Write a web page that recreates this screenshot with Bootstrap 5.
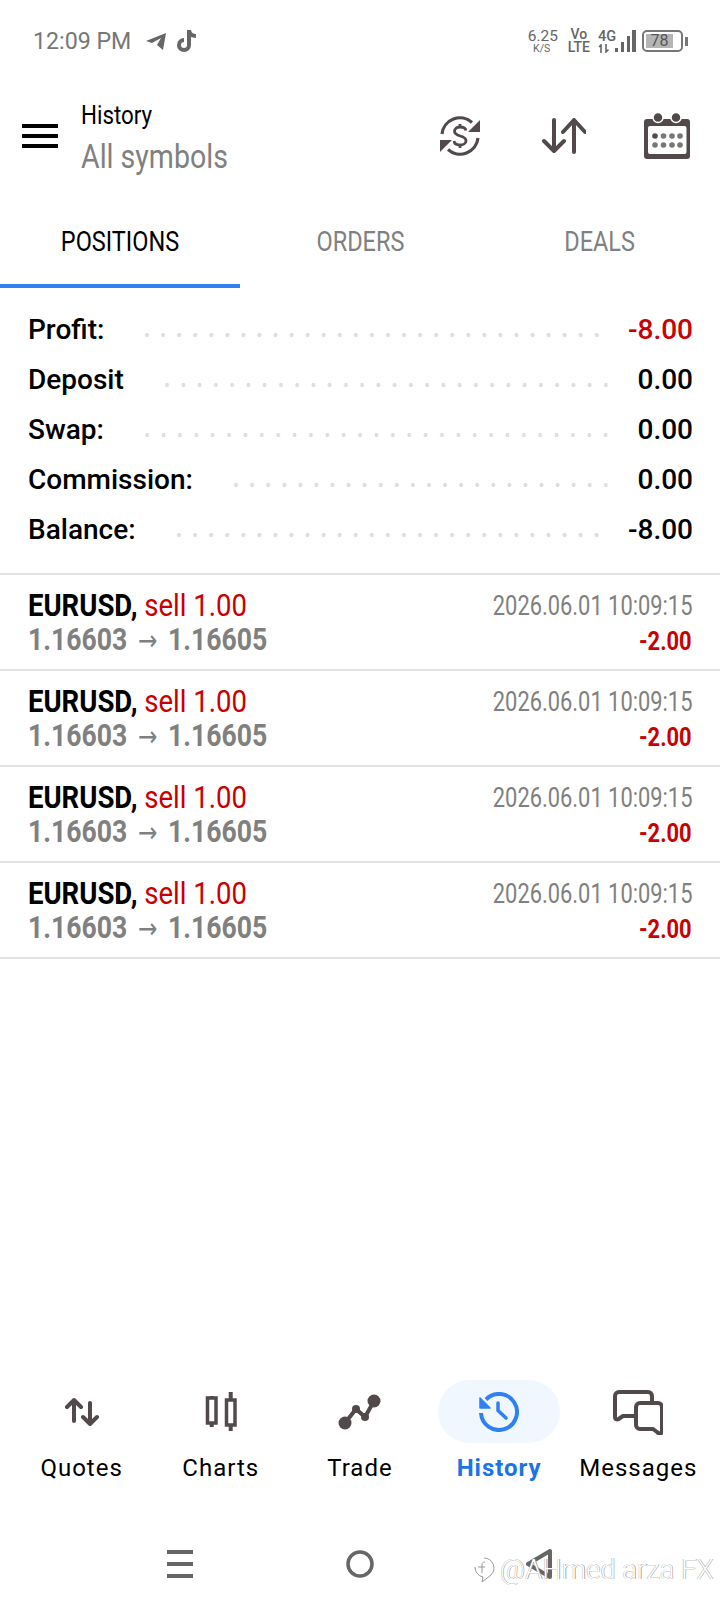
<!DOCTYPE html>
<html>
<head>
  <meta charset="utf-8">
  <title>History</title>
  <link rel="stylesheet" href="https://cdn.jsdelivr.net/npm/bootstrap@5.3.0/dist/css/bootstrap.min.css">
  <style>
    body {
      background: #fff;
      font-family: Roboto, "Liberation Sans", sans-serif;
      color: #000;
    }
    .phone {
      width: 720px;
      height: 1612px;
      position: relative;
      overflow: hidden;
      display: flex;
      flex-direction: column;
    }
    /* Roboto Condensed is not installed, so narrow text gets squeezed */
    .narrow { display: inline-block; transform: scaleX(.86); transform-origin: left center; white-space: nowrap; }
    .narrow-r { display: inline-block; transform: scaleX(.81); transform-origin: right center; white-space: nowrap; }
    .narrow-c { display: inline-block; transform: scaleX(.87); transform-origin: center; white-space: nowrap; }

    .status-bar { height: 80px; flex: none; padding: 2px 32px 0 33px; color: #777; }
    .status-time { font-size: 23.2px; line-height: 1; margin-right: 15px; padding-top: 1px; }
    .ico-tiktok { margin-left: 11px; }
    .net-speed { font-size: 15.5px; line-height: 14px; text-align: center; color: #666; width: 28px; margin-right: 12px; }
    .net-speed b { font-weight: 400; font-size: 10.5px; line-height: 11px; display: block; }
    .net-lte { font-size: 14px; line-height: 13px; color: #666; text-align: center; font-weight: 500; margin-right: 8px; }
    .net-4g { font-size: 14.5px; line-height: 14px; color: #666; font-weight: 500; width: 17px; }
    .net-4g svg { display: block; }
    .ico-signal { margin-right: 6px; }
    .batt { width: 41px; height: 22px; border: 2px solid #777; border-radius: 5px; padding: 2px; }
    .batt-fill { width: 27px; height: 100%; background: #b5b5b5; font-size: 16px; line-height: 14px; text-align: center; color: #555; }
    .batt-tip { width: 3px; height: 9px; background: #777; margin-left: 2px; }

    .top-bar { height: 112px; flex: none; padding: 0 30px 0 22px; }
    .burger { width: 36px; margin-right: 23px; }
    .burger i { display: block; height: 4px; background: #000; margin: 6px 0; }
    .top-text { margin-top: 4px; }
    .top-title { font-size: 26px; line-height: 30px; }
    .top-sub { font-size: 34px; line-height: 40px; margin-top: 6px; color: #808080; }
    .top-sub .narrow { transform: scaleX(.84); }
    .ico-arrows { margin: 0 58px 0 62px; }

    .tabs-row { height: 96px; flex: none; }
    .tab-item { width: 240px; font-size: 27px; line-height: 50px; padding-top: 25px; height: 96px; text-align: center; color: #808080; }
    .tab-item.on { color: #000; border-bottom: 4px solid #2f80f0; }

    .summary { padding: 17px 27px 0 28px; height: 285px; flex: none; }
    .sum-row { height: 50px; display: flex; align-items: center; font-size: 28px; font-weight: 500; }
    .sum-dots {
      height: 4px; margin: 10px 23px 0 35px; flex-grow: 1;
      background-image: radial-gradient(circle, #dedede 1.8px, transparent 2.1px);
      background-size: 16.15px 4px;
      background-repeat: round no-repeat;
    }
    .txt-red { color: #c80000; }

    .deal-list { border-top: 2px solid #e2e2e2; flex: none; }
    .deal-row { height: 96px; padding: 13px 28px 0 28px; border-bottom: 2px solid #e2e2e2; display: flex; justify-content: space-between; }
    .deal-main { font-size: 32px; line-height: 34px; }
    .deal-main b { font-weight: 700; }
    .deal-price { font-size: 32px; line-height: 34px; font-weight: 700; color: #808080; }
    .deal-price .narrow { transform: scaleX(.83); }
    .deal-price i { font-style: normal; font-family: "DejaVu Sans", sans-serif; font-size: 28px; font-weight: 400; margin: 0 5px; }
    .deal-date { font-size: 27px; line-height: 36px; color: #808080; }
    .deal-pl { font-size: 26px; line-height: 34px; font-weight: 700; color: #c80000; }
    .deal-pl .narrow-r { transform: scaleX(.84); }

    .bottom-nav { margin-top: auto; height: 168px; flex: none; padding: 0 12px; display: flex; }
    .nav-cell { width: 139.2px; display: flex; flex-direction: column; align-items: center; }
    .nav-ico { height: 63px; width: 122px; display: flex; align-items: center; justify-content: center; border-radius: 32px; }
    .nav-cell.on .nav-ico { background: #f0f7fe; }
    .nav-lbl { font-size: 24px; line-height: 28px; margin-top: 11px; letter-spacing: 1px; white-space: nowrap; }
    .nav-cell.on .nav-lbl { color: #1a73e8; font-weight: 700; }

    .sys-nav { height: 64px; flex: none; padding-left: 167px; display: flex; align-items: flex-start; }
    .sys-home { margin: 0 152px 0 153px; }
    .watermark {
      position: absolute; left: 473px; top: 1552px; font-size: 27.5px; line-height: 36px;
      color: #fff; white-space: nowrap; font-weight: 300; display: flex; align-items: center; gap: 5px;
      text-shadow: .6px 0 .4px #888, -.6px 0 .4px rgba(120,120,120,.5);
    }
  </style>
</head>
<body>
<div class="phone">

  <div class="status-bar d-flex align-items-center">
    <span class="status-time">12:09 PM</span>
    <svg width="20" height="18" viewBox="0 0 20 18"><path d="M0 9 20 1 17 18 11 13 15 6 6 11Z" fill="#666"/></svg>
    <svg class="ico-tiktok" width="20" height="22" viewBox="0 0 20 22"><path d="M10 0h4c.3 2.500 2 4 5 4v4c-2 0-4-.5-5-1.200V15a7 7 0 1 1-7-7v4a3 3 0 1 0 3 3Z" fill="#666"/></svg>
    <div class="ms-auto d-flex align-items-center">
      <div class="net-speed">6.25<b>K/S</b></div>
      <div class="net-lte">Vo<br>LTE</div>
      <div class="net-4g">4G
        <svg width="12" height="9" viewBox="0 0 12 9" fill="none" stroke="#666" stroke-width="1.600"><path d="M3 9V1L1 3M8 0v8l2.500-2.500"/></svg>
      </div>
      <svg class="ico-signal" width="21" height="22" viewBox="0 0 21 22"><g fill="#666"><rect x="0" y="18" width="3" height="4"/><rect x="6" y="12" width="3" height="10"/><rect x="12" y="6" width="3" height="16"/><rect x="17" y="0" width="4" height="22"/></g></svg>
      <div class="batt"><div class="batt-fill">78</div></div>
      <div class="batt-tip"></div>
    </div>
  </div>

  <div class="top-bar d-flex align-items-center">
    <div class="burger"><i></i><i></i><i></i></div>
    <div class="top-text">
      <div class="top-title"><span class="narrow">History</span></div>
      <div class="top-sub"><span class="narrow">All symbols</span></div>
    </div>
    <div class="d-flex align-items-center ms-auto">
      <svg width="40" height="40" viewBox="0 0 40 40" fill="none" stroke="#524a4a" stroke-width="3.200"><path d="M2 18A18 18 0 0 1 32 6.500"/><path d="M38 22A18 18 0 0 1 8 33.500"/><path d="M40 4V16H28Z" fill="#524a4a" stroke="none"/><path d="M0 36V24H12Z" fill="#524a4a" stroke="none"/><path d="M26 14.500C25.500 11.500 22.500 11 20 11 17 11 14.500 12.500 14.500 15.300 14.500 21.500 26 18.500 26 24.700 26 27.500 23 29 20 29 17 29 14.500 28 14 25M20 8v3M20 29v3" stroke-width="2.800"/></svg>
      <svg class="ico-arrows" width="44" height="36" viewBox="0 0 44 36" fill="none" stroke="#524a4a" stroke-width="4" stroke-linecap="round" stroke-linejoin="round"><path d="M12 2V33M2 23 12 33 22 23"/><path d="M32 34V2M21 14 32 2 43 14"/></svg>
      <svg width="46" height="46" viewBox="0 0 46 46"><path d="M3 6H43a3 3 0 0 1 3 3V43a3 3 0 0 1-3 3H3a3 3 0 0 1-3-3V9a3 3 0 0 1 3-3Z" fill="#524a4a"/><rect x="4" y="13" width="38.500" height="28" rx="2" fill="#fff"/><circle cx="14" cy="4.500" r="5" fill="#524a4a" stroke="#fff" stroke-width="1.500"/><circle cx="32" cy="4.500" r="5" fill="#524a4a" stroke="#fff" stroke-width="1.500"/><g fill="#777"><circle cx="11" cy="23" r="2.800" fill="#524a4a"/><circle cx="19.500" cy="23" r="2.800"/><circle cx="28" cy="23" r="2.800"/><circle cx="36" cy="23" r="2.800"/><circle cx="11" cy="32" r="2.800"/><circle cx="19.500" cy="32" r="2.800"/><circle cx="28" cy="32" r="2.800"/><circle cx="36" cy="32" r="2.800"/></g></svg>
    </div>
  </div>

  <div class="tabs-row d-flex">
    <div class="tab-item on"><span class="narrow-c">POSITIONS</span></div>
    <div class="tab-item"><span class="narrow-c">ORDERS</span></div>
    <div class="tab-item"><span class="narrow-c">DEALS</span></div>
  </div>

  <div class="summary">
    <div class="sum-row"><span>Profit:</span><span class="sum-dots"></span><span class="txt-red">-8.00</span></div>
    <div class="sum-row"><span>Deposit</span><span class="sum-dots"></span><span>0.00</span></div>
    <div class="sum-row"><span>Swap:</span><span class="sum-dots"></span><span>0.00</span></div>
    <div class="sum-row"><span>Commission:</span><span class="sum-dots"></span><span>0.00</span></div>
    <div class="sum-row"><span>Balance:</span><span class="sum-dots"></span><span>-8.00</span></div>
  </div>

  <div class="deal-list" id="deals"></div>

  <div class="bottom-nav">
    <div class="nav-cell">
      <div class="nav-ico"><svg width="34" height="30" viewBox="0 0 34 30" fill="none" stroke="#524a4a" stroke-width="4" stroke-linecap="round" stroke-linejoin="round"><path d="M9 24V3M2 10l7-7 7 7"/><path d="M25 6v21M18 20l7 7 7-7"/></svg></div>
      <div class="nav-lbl">Quotes</div>
    </div>
    <div class="nav-cell">
      <div class="nav-ico"><svg width="32" height="39" viewBox="0 0 32 39" fill="none" stroke="#524a4a" stroke-width="3.500"><rect x="2.500" y="6" width="8.500" height="25"/><rect x="21.500" y="8" width="8.500" height="25"/><path d="M6.700 4v2M6.700 31v4M25.700 0v8M25.700 33v6" stroke-width="4"/></svg></div>
      <div class="nav-lbl">Charts</div>
    </div>
    <div class="nav-cell">
      <div class="nav-ico"><svg width="46" height="38" viewBox="0 0 46 38" fill="none"><path d="M8 30 19 16 28 24 37 8" stroke="#524a4a" stroke-width="4" stroke-linecap="round"/><g fill="#524a4a"><circle cx="8" cy="30" r="6.500"/><circle cx="19" cy="16" r="4"/><circle cx="28" cy="24" r="4"/><circle cx="37" cy="8" r="6.500"/></g></svg></div>
      <div class="nav-lbl">Trade</div>
    </div>
    <div class="nav-cell on">
      <div class="nav-ico"><svg width="40" height="40" viewBox="0 0 40 40" fill="none" stroke="#2f80f0" stroke-width="4"><path d="M7 7.500A18 18 0 1 1 2 21"/><path d="M1 6V16H11Z" fill="#2f80f0" stroke-width="1.500" stroke-linejoin="round"/><path d="M19 11V18.500L27 26" stroke-width="3.500" stroke-linecap="round"/></svg></div>
      <div class="nav-lbl">History</div>
    </div>
    <div class="nav-cell">
      <div class="nav-ico"><svg width="50" height="46" viewBox="0 0 50 46" fill="none" stroke="#524a4a" stroke-width="4" stroke-linejoin="round"><path d="M39 14V7a4 4 0 0 0-4-4H6a4 4 0 0 0-4 4v21c0 3 3 3 5 1l3-2h12"/><path d="M27 14h18a4 4 0 0 1 4 4v24c0 3-3 3-5 1l-4-3H27a4 4 0 0 1-4-4V18a4 4 0 0 1 4-4Z"/></svg></div>
      <div class="nav-lbl">Messages</div>
    </div>
  </div>

  <div class="sys-nav">
    <svg width="26" height="30" viewBox="0 0 26 30"><g fill="#666"><rect y="2" width="26" height="4"/><rect y="14" width="26" height="4"/><rect y="26" width="26" height="4"/></g></svg>
    <svg class="sys-home" width="28" height="30" viewBox="0 0 28 30"><circle cx="14" cy="16" r="12" fill="none" stroke="#666" stroke-width="3.500"/></svg>
    <svg width="26" height="32" viewBox="0 0 26 32"><path d="M2 16 24 3V29Z" fill="none" stroke="#666" stroke-width="4" stroke-linejoin="round"/></svg>
  </div>
  <div class="watermark">
    <svg width="22" height="28" viewBox="0 0 22 28" fill="none" stroke="#999" stroke-width="1"><path d="M11 2a10 10 0 0 1 7 17l-9 7 1-5a10 10 0 0 1-8-10"/><path d="M12 6c-2 0-3 1-3 3v8M5 11h7"/></svg>
    <span>@AHmed arza FX</span>
  </div>
</div>

<script>
  // the four deal rows are identical
  let html = "";
  for (let i = 0; i < 4; i++) {
    html += '<div class="deal-row"><div>' +
      '<div class="deal-main"><span class="narrow"><b>EURUSD,</b> <span class="txt-red">sell 1.00</span></span></div>' +
      '<div class="deal-price"><span class="narrow">1.16603 <i>→</i> 1.16605</span></div></div>' +
      '<div class="text-end"><div class="deal-date"><span class="narrow-r">2026.06.01 10:09:15</span></div>' +
      '<div class="deal-pl"><span class="narrow-r">-2.00</span></div></div></div>';
  }
  document.getElementById("deals").innerHTML = html;
</script>
</body>
</html>
